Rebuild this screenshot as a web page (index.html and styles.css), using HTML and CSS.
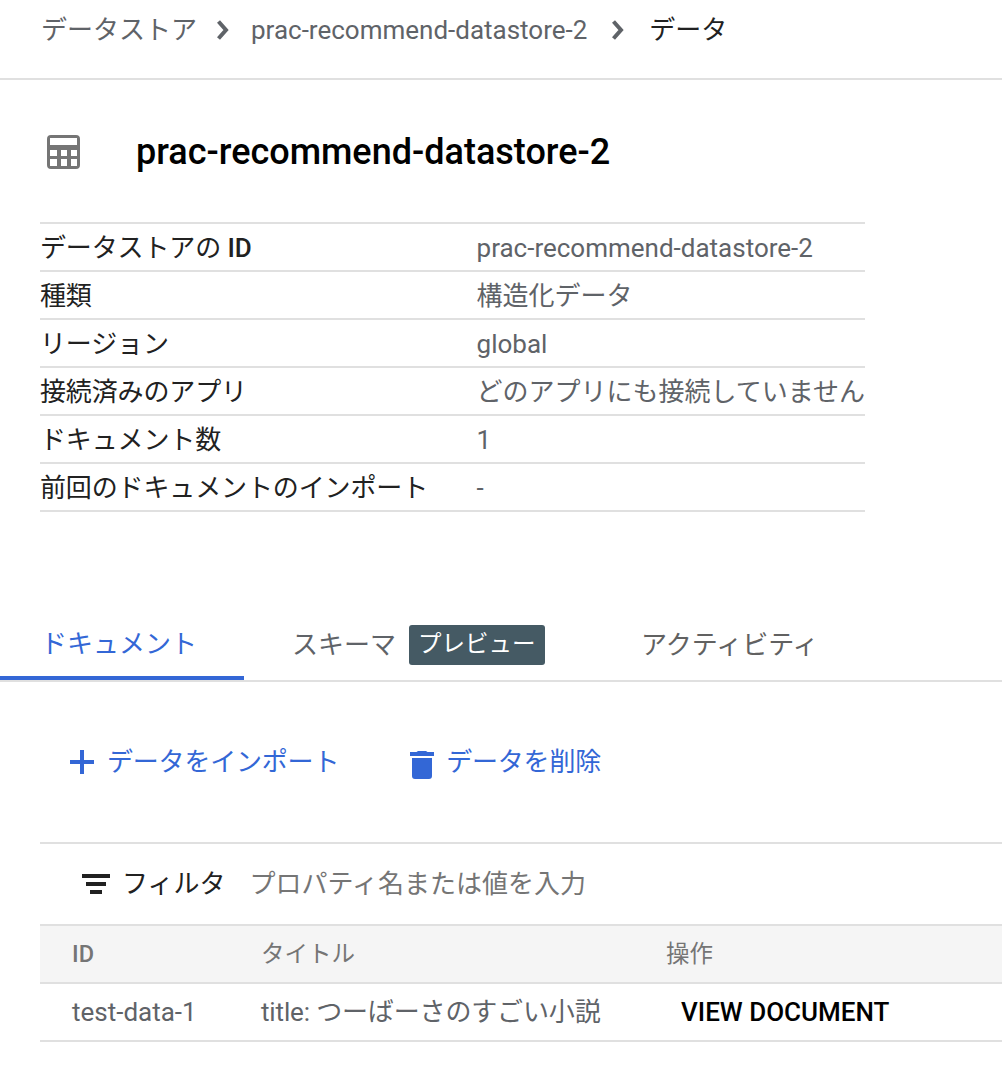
FILE: index.html
```html
<!DOCTYPE html>
<html lang="ja">
<head>
  <meta charset="UTF-8" />
  <title>データ</title>
  <link rel="stylesheet" href="styles.css">
</head>
<body>

  <nav class="breadcrumb">
    <span>データストア</span>
    <svg class="crumb-sep" viewBox="0 0 12 20"><path d="M1.500 1.500 9 10l-7.500 8.500" fill="none" stroke="#5f6368" stroke-width="4"/></svg>
    <span class="crumb-mid">prac-recommend-datastore-2</span>
    <svg class="crumb-sep" viewBox="0 0 12 20"><path d="M1.500 1.500 9 10l-7.500 8.500" fill="none" stroke="#5f6368" stroke-width="4"/></svg>
    <span class="crumb-current">データ</span>
  </nav>

  <div class="title-row">
    <svg class="title-icon" viewBox="0 0 33 34">
      <path fill="#757575" fill-rule="evenodd" d="M4 0h25a4 4 0 0 1 4 4v26a4 4 0 0 1-4 4H4a4 4 0 0 1-4-4V4a4 4 0 0 1 4-4zM3 3v7h27V3zM3 15v6h7v-6zM14 15v6h6v-6zM24 15v6h6v-6zM3 24v7h7v-7zM14 24v7h6v-7zM24 24v7h6v-7z"/>
    </svg>
    <h1>prac-recommend-datastore-2</h1>
  </div>

  <table class="info">
    <tr><th>データストアの <b>ID</b></th><td>prac-recommend-datastore-2</td></tr>
    <tr><th>種類</th><td>構造化データ</td></tr>
    <tr><th>リージョン</th><td>global</td></tr>
    <tr><th>接続済みのアプリ</th><td>どのアプリにも接続していません</td></tr>
    <tr><th>ドキュメント数</th><td>1</td></tr>
    <tr><th>前回のドキュメントのインポート</th><td>-</td></tr>
  </table>

  <div class="tabs">
    <div class="tab tab-active">ドキュメント</div>
    <div class="tab tab-schema">スキーマ <span class="badge">プレビュー</span></div>
    <div class="tab tab-activity">アクティビティ</div>
  </div>

  <div class="actions">
    <button class="action">
      <svg viewBox="0 0 24 24" class="plus"><path d="M10 0h4v10h10v4H14v10h-4V14H0v-4h10z" fill="#3367d6"/></svg>
      データをインポート
    </button>
    <button class="action">
      <svg viewBox="0 0 24 28" class="trash"><path d="M8 0h8l1.500 1H24v4H0V1h6.500zM2 7h20v18a3 3 0 0 1-3 3H5a3 3 0 0 1-3-3z" fill="#3367d6"/></svg>
      データを削除
    </button>
  </div>

  <div class="filter-bar">
    <svg class="filter-icon" viewBox="0 0 28 20"><path d="M0 0h28v4H0zM4 8h20v4H4zM8 16h12v4H8z" fill="#212121"/></svg>
    <span class="filter-label">フィルタ</span>
    <span class="filter-hint">プロパティ名または値を入力</span>
  </div>

  <table class="docs">
    <thead>
      <tr><th class="col-id">ID</th><th class="col-title">タイトル</th><th>操作</th></tr>
    </thead>
    <tbody>
      <tr><td>test-data-1</td><td class="title-cell">title: つーばーさのすごい小説</td><td class="view-cell"><a href="#">VIEW DOCUMENT</a></td></tr>
    </tbody>
  </table>

</body>
</html>
```

FILE: styles.css
```css
* { box-sizing: border-box; }

body {
  margin: 0;
  background: #fff;
  color: #5f6368;
  font-family: Roboto, "Noto Sans CJK JP", sans-serif;
  font-size: 26px;
  line-height: 30px;
}

.breadcrumb {
  height: 80px;
  padding: 2px 0 20px 41px;
  display: flex;
  align-items: center;
  border-bottom: 2px solid #e0e0e0;
}

.crumb-sep {
  width: 12px;
  height: 20px;
  margin: 0 22px 0 20px;
}

.crumb-mid { margin-right: 5px; }
.crumb-current { color: #212121; margin-left: 3px; }

.title-row {
  display: flex;
  align-items: center;
  height: 142px;
  padding-left: 47px;
  padding-top: 2px;
}

.title-icon {
  width: 33px;
  height: 34px;
  margin-right: 56px;
}

h1 {
  margin: 0;
  color: #000;
  font-size: 36px;
  font-weight: 500;
}

table { border-collapse: collapse; }

.info {
  width: 825px;
  margin-left: 40px;
  border-top: 2px solid #e0e0e0;
}

.info th, .info td {
  height: 48px;
  padding: 2px 0 0;
  border-bottom: 2px solid #e0e0e0;
  text-align: left;
  font-weight: 400;
  white-space: nowrap;
}

.info th { width: 438px; color: #212121; letter-spacing: -0.13px; }
.info td { padding-left: 2px; }
.info th b { font-weight: 500; }

.tabs {
  display: flex;
  height: 70px;
  margin-top: 100px;
  border-bottom: 2px solid #e0e0e0;
}

.tab {
  height: 68px;
  display: flex;
  align-items: center;
  padding-bottom: 2px;
  white-space: nowrap;
}

.tab-active {
  width: 244px;
  padding: 0 0 0 41px;
  color: #3367d6;
  border-bottom: 4px solid #3367d6;
}

.tab-schema { padding-left: 48px; width: 397px; }
.tab-activity { color: #616161; }

.badge {
  margin-left: 13px;
  padding: 0 9px;
  height: 40px;
  line-height: 38px;
  border-radius: 3px;
  background: #455a64;
  color: #fff;
  font-size: 23.5px;
}

.actions {
  display: flex;
  align-items: center;
  height: 162px;
  margin-left: 40px;
  padding-left: 30px;
  border-bottom: 2px solid #e0e0e0;
}

.action {
  display: flex;
  align-items: center;
  padding: 0;
  border: none;
  background: none;
  color: #3367d6;
  font: inherit;
  letter-spacing: -0.2px;
}

.plus { width: 24px; height: 24px; margin-right: 13px; }
.trash { width: 24px; height: 28px; margin: 5px 12px 0 71px; }

.filter-bar {
  display: flex;
  align-items: center;
  height: 82px;
  margin-left: 40px;
  padding-left: 42px;
  border-bottom: 2px solid #e0e0e0;
}

.filter-icon { width: 28px; height: 20px; margin: 0 12px 0 0; }
.filter-label { color: #212121; margin-right: 24px; }
.filter-hint { color: #757575; }

.docs {
  width: 962px;
  margin-left: 40px;
  table-layout: fixed;
}

.docs th, .docs td {
  padding: 0 0 0 32px;
  text-align: left;
  border-bottom: 2px solid #e0e0e0;
  white-space: nowrap;
}

.docs th {
  height: 57px;
  background: #f5f5f5;
  color: #757575;
  font-size: 23.5px;
  font-weight: 400;
}

.docs td { height: 58px; }

.col-id { width: 189px; font-weight: 500 !important; }
.col-title { width: 405px; }
.title-cell { letter-spacing: -0.15px; }

.view-cell a {
  margin-left: 15px;
  color: #000;
  font-weight: 500;
  text-decoration: none;
}
```
